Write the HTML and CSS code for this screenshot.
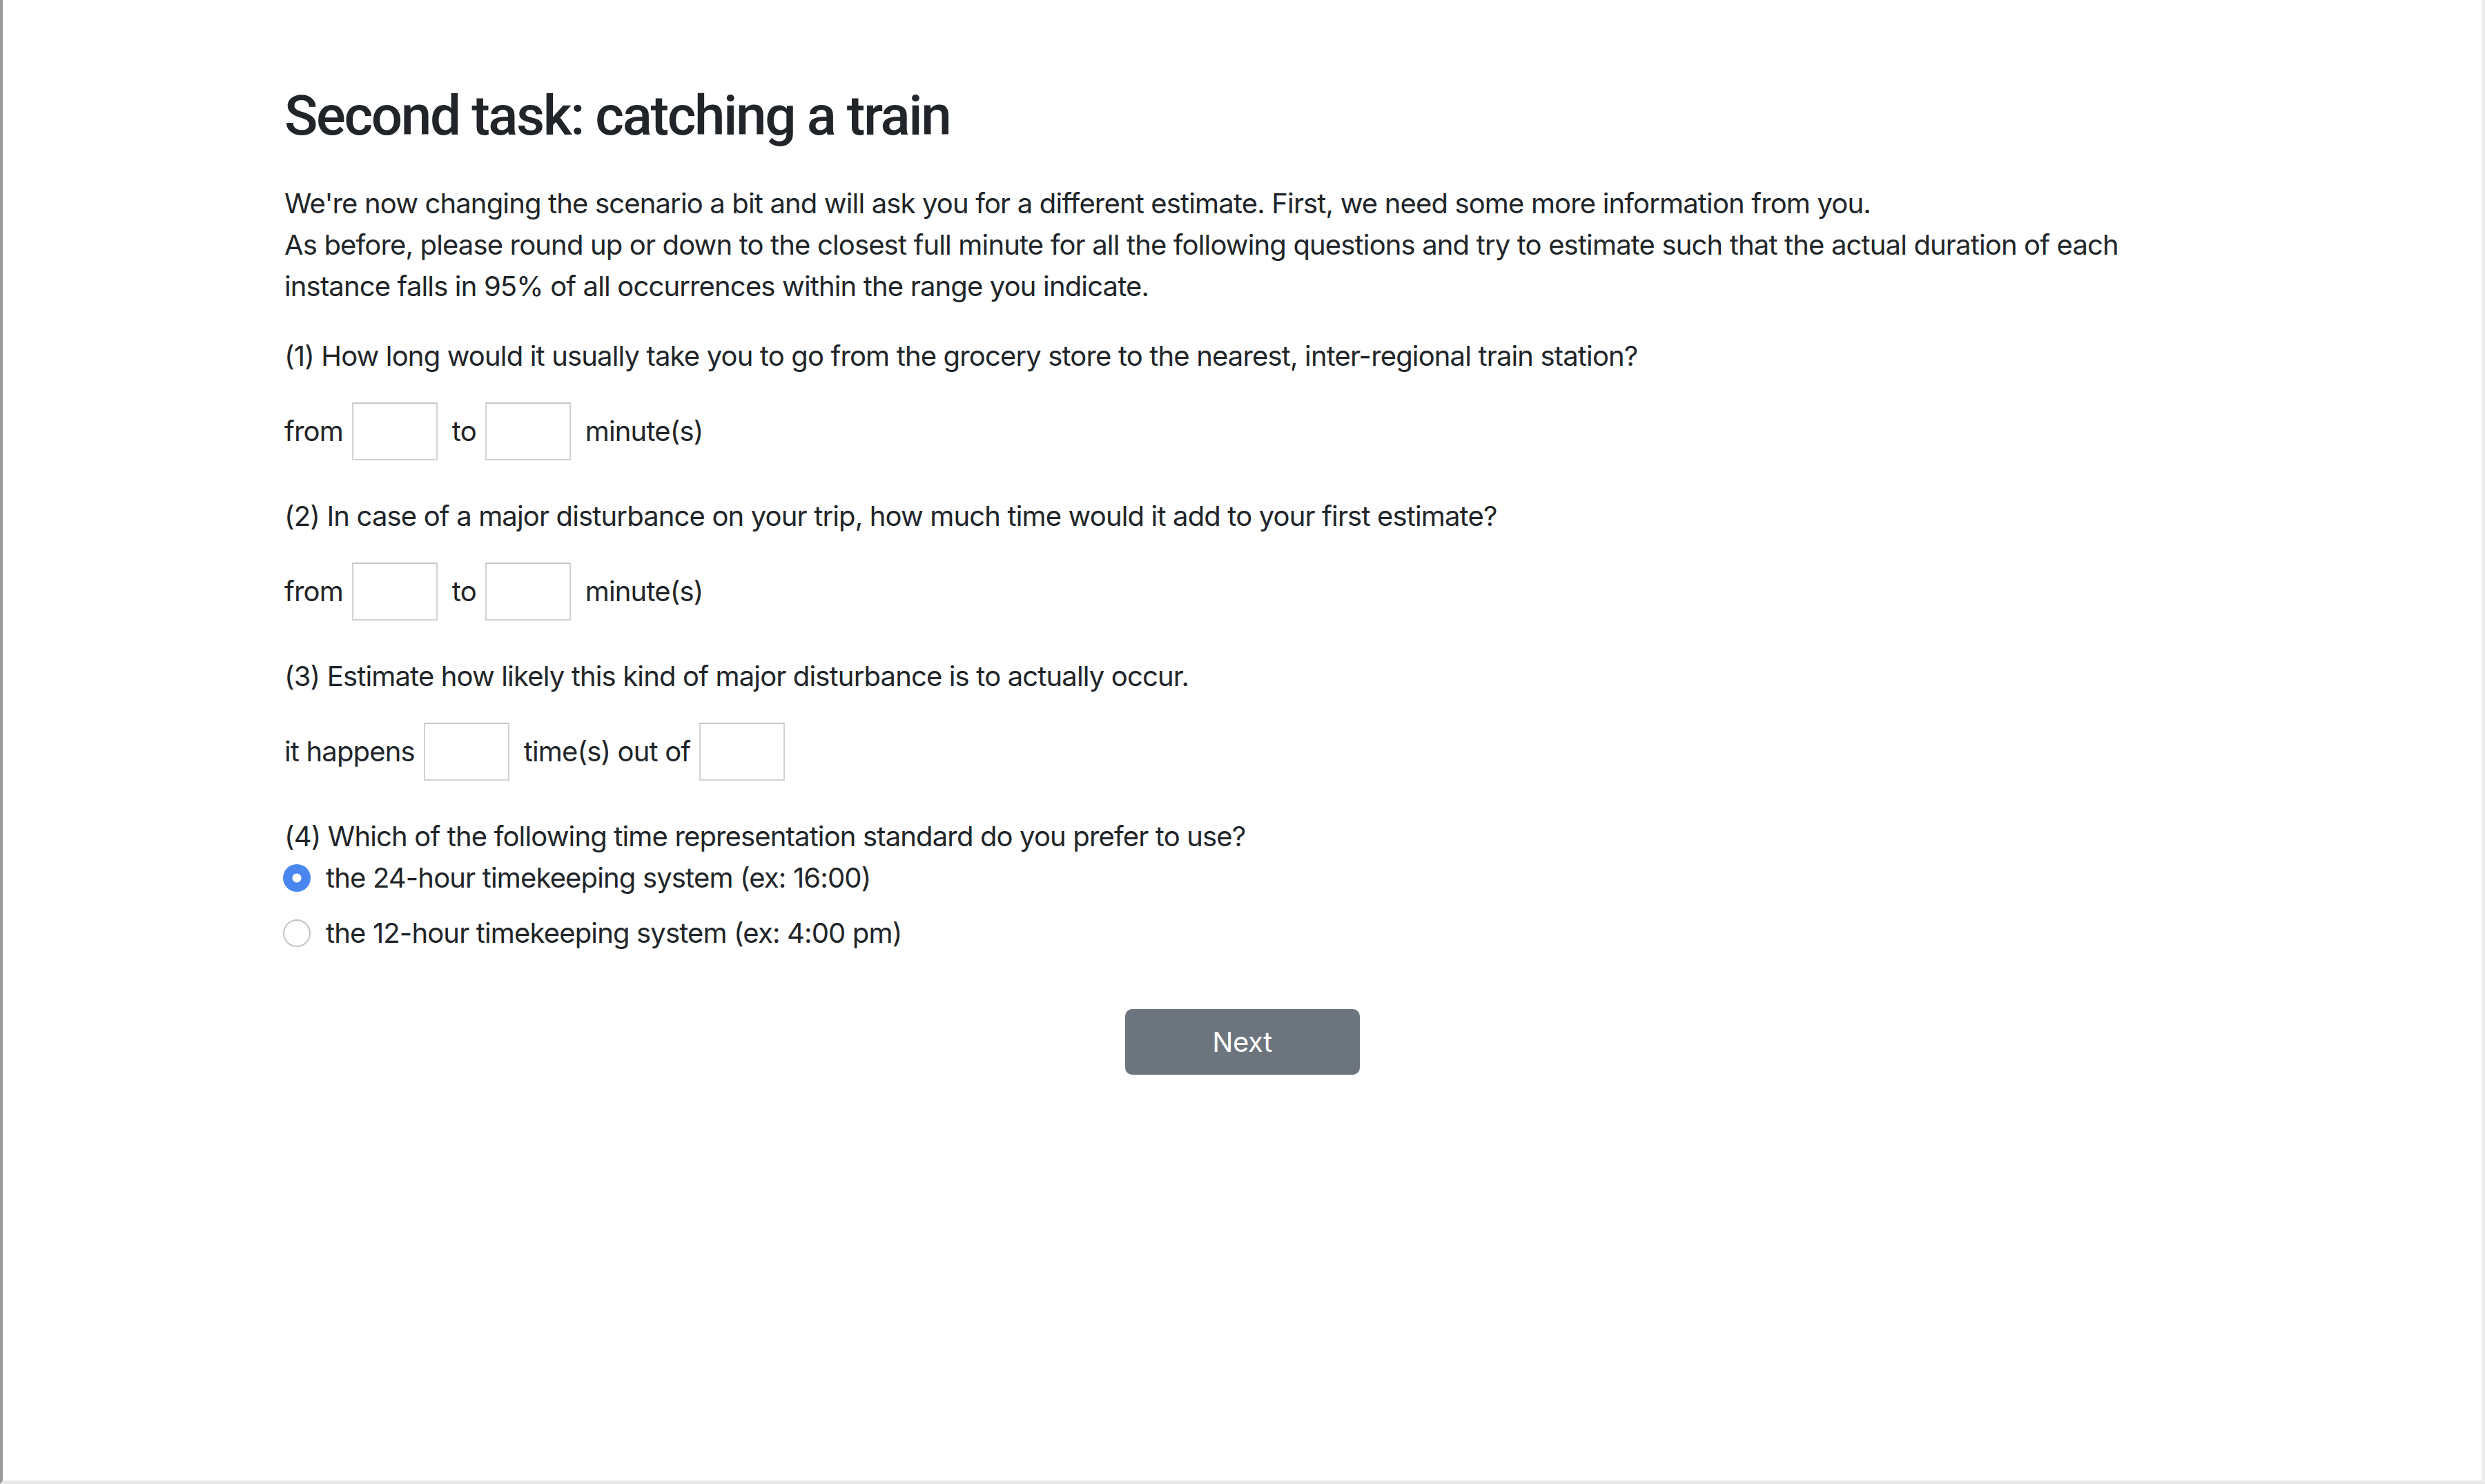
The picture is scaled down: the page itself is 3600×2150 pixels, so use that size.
FILE: index.html
```html
<!DOCTYPE html>
<html lang="en">
<head>
<meta charset="utf-8">
<title>Second task: catching a train</title>
<link rel="stylesheet" href="styles.css">
</head>
<body>
<div class="frame">
  <main class="container">
    <h2 class="title">Second task: catching a train</h2>
    <p class="intro">We're now changing the scenario a bit and will ask you for a different estimate. First, we need some more information from you.<br>As before, please round up or down to the closest full minute for all the following questions and try to estimate such that the actual duration of each instance falls in 95% of all occurrences within the range you indicate.</p>
    <form class="survey">
      <p class="question">(1) How long would it usually take you to go from the grocery store to the nearest, inter-regional train station?</p>
      <div class="answer-row">
        <span>from</span><input class="num" type="text"><span>to</span><input class="num" type="text"><span>minute(s)</span>
      </div>
      <p class="question">(2) In case of a major disturbance on your trip, how much time would it add to your first estimate?</p>
      <div class="answer-row">
        <span>from</span><input class="num" type="text"><span>to</span><input class="num" type="text"><span>minute(s)</span>
      </div>
      <p class="question">(3) Estimate how likely this kind of major disturbance is to actually occur.</p>
      <div class="answer-row">
        <span>it happens</span><input class="num" type="text"><span>time(s) out of</span><input class="num" type="text">
      </div>
      <p class="question question-last">(4) Which of the following time representation standard do you prefer to use?</p>
      <label class="choice"><input class="radio" type="radio" name="clock" checked><span>the 24-hour timekeeping system (ex: 16:00)</span></label>
      <label class="choice"><input class="radio" type="radio" name="clock"><span>the 12-hour timekeeping system (ex: 4:00 pm)</span></label>
      <div class="actions">
        <button class="btn-next" type="button">Next</button>
      </div>
    </form>
  </main>
</div>
</body>
</html>
```

FILE: styles.css
```css
html, body {
  margin: 0;
  padding: 0;
  background: #ffffff;
}

body {
  font-family: Inter, "Liberation Sans", Arial, sans-serif;
  font-size: 40px;
  line-height: 60px;
  letter-spacing: -0.85px;
  color: #212529;
}

.frame {
  box-sizing: border-box;
  height: 2150px;
  border-left: 4px solid #9a9a9a;
  border-right: 5px solid #eeeeee;
  border-bottom: 5px solid #e8e8e8;
  overflow: hidden;
}

.container {
  box-sizing: border-box;
  width: 2850px;
  margin: 0 auto;
  padding: 120px 37.5px 0;
}

.title {
  margin: 0 0 49px;
  font-family: Roboto, Inter, "Liberation Sans", Arial, sans-serif;
  font-size: 80px;
  font-weight: 500;
  line-height: 96px;
  letter-spacing: -2.4px;
  color: #212529;
}

.intro {
  margin: 0 0 41px;
}

.survey {
  margin: 0;
}

.question {
  margin: 0 0 37px;
}

.question-last {
  margin-bottom: 0;
}

.answer-row {
  display: flex;
  align-items: center;
  height: 84px;
  margin-bottom: 51px;
}

.num {
  box-sizing: border-box;
  width: 124px;
  height: 84px;
  margin: 0 21px 0 13px;
  padding: 0;
  border: 2px solid #d2d2d2;
  border-top-color: #c6c6c6;
  background: #ffffff;
  font: inherit;
  outline: none;
}

.choice {
  display: flex;
  align-items: center;
  height: 60px;
  margin-bottom: 20px;
}

.radio {
  appearance: none;
  -webkit-appearance: none;
  box-sizing: border-box;
  width: 40px;
  height: 40px;
  margin: 0 22px 0 -2px;
  border-radius: 50%;
  border: 2px solid #c4c4c4;
  background: #ffffff;
  box-shadow: inset 0 1px 2px rgba(0, 0, 0, 0.06);
  flex: none;
}

.radio:checked {
  border: none;
  background: radial-gradient(circle, #ffffff 0 6px, #4a86f0 7px);
  box-shadow: none;
}

.actions {
  display: flex;
  justify-content: center;
  margin-top: 80px;
}

.btn-next {
  width: 340px;
  height: 95px;
  padding: 0;
  border: none;
  border-radius: 10px;
  background: #6c757d;
  color: #ffffff;
  font-family: inherit;
  font-size: 40px;
  line-height: 60px;
  letter-spacing: -0.4px;
}
```
